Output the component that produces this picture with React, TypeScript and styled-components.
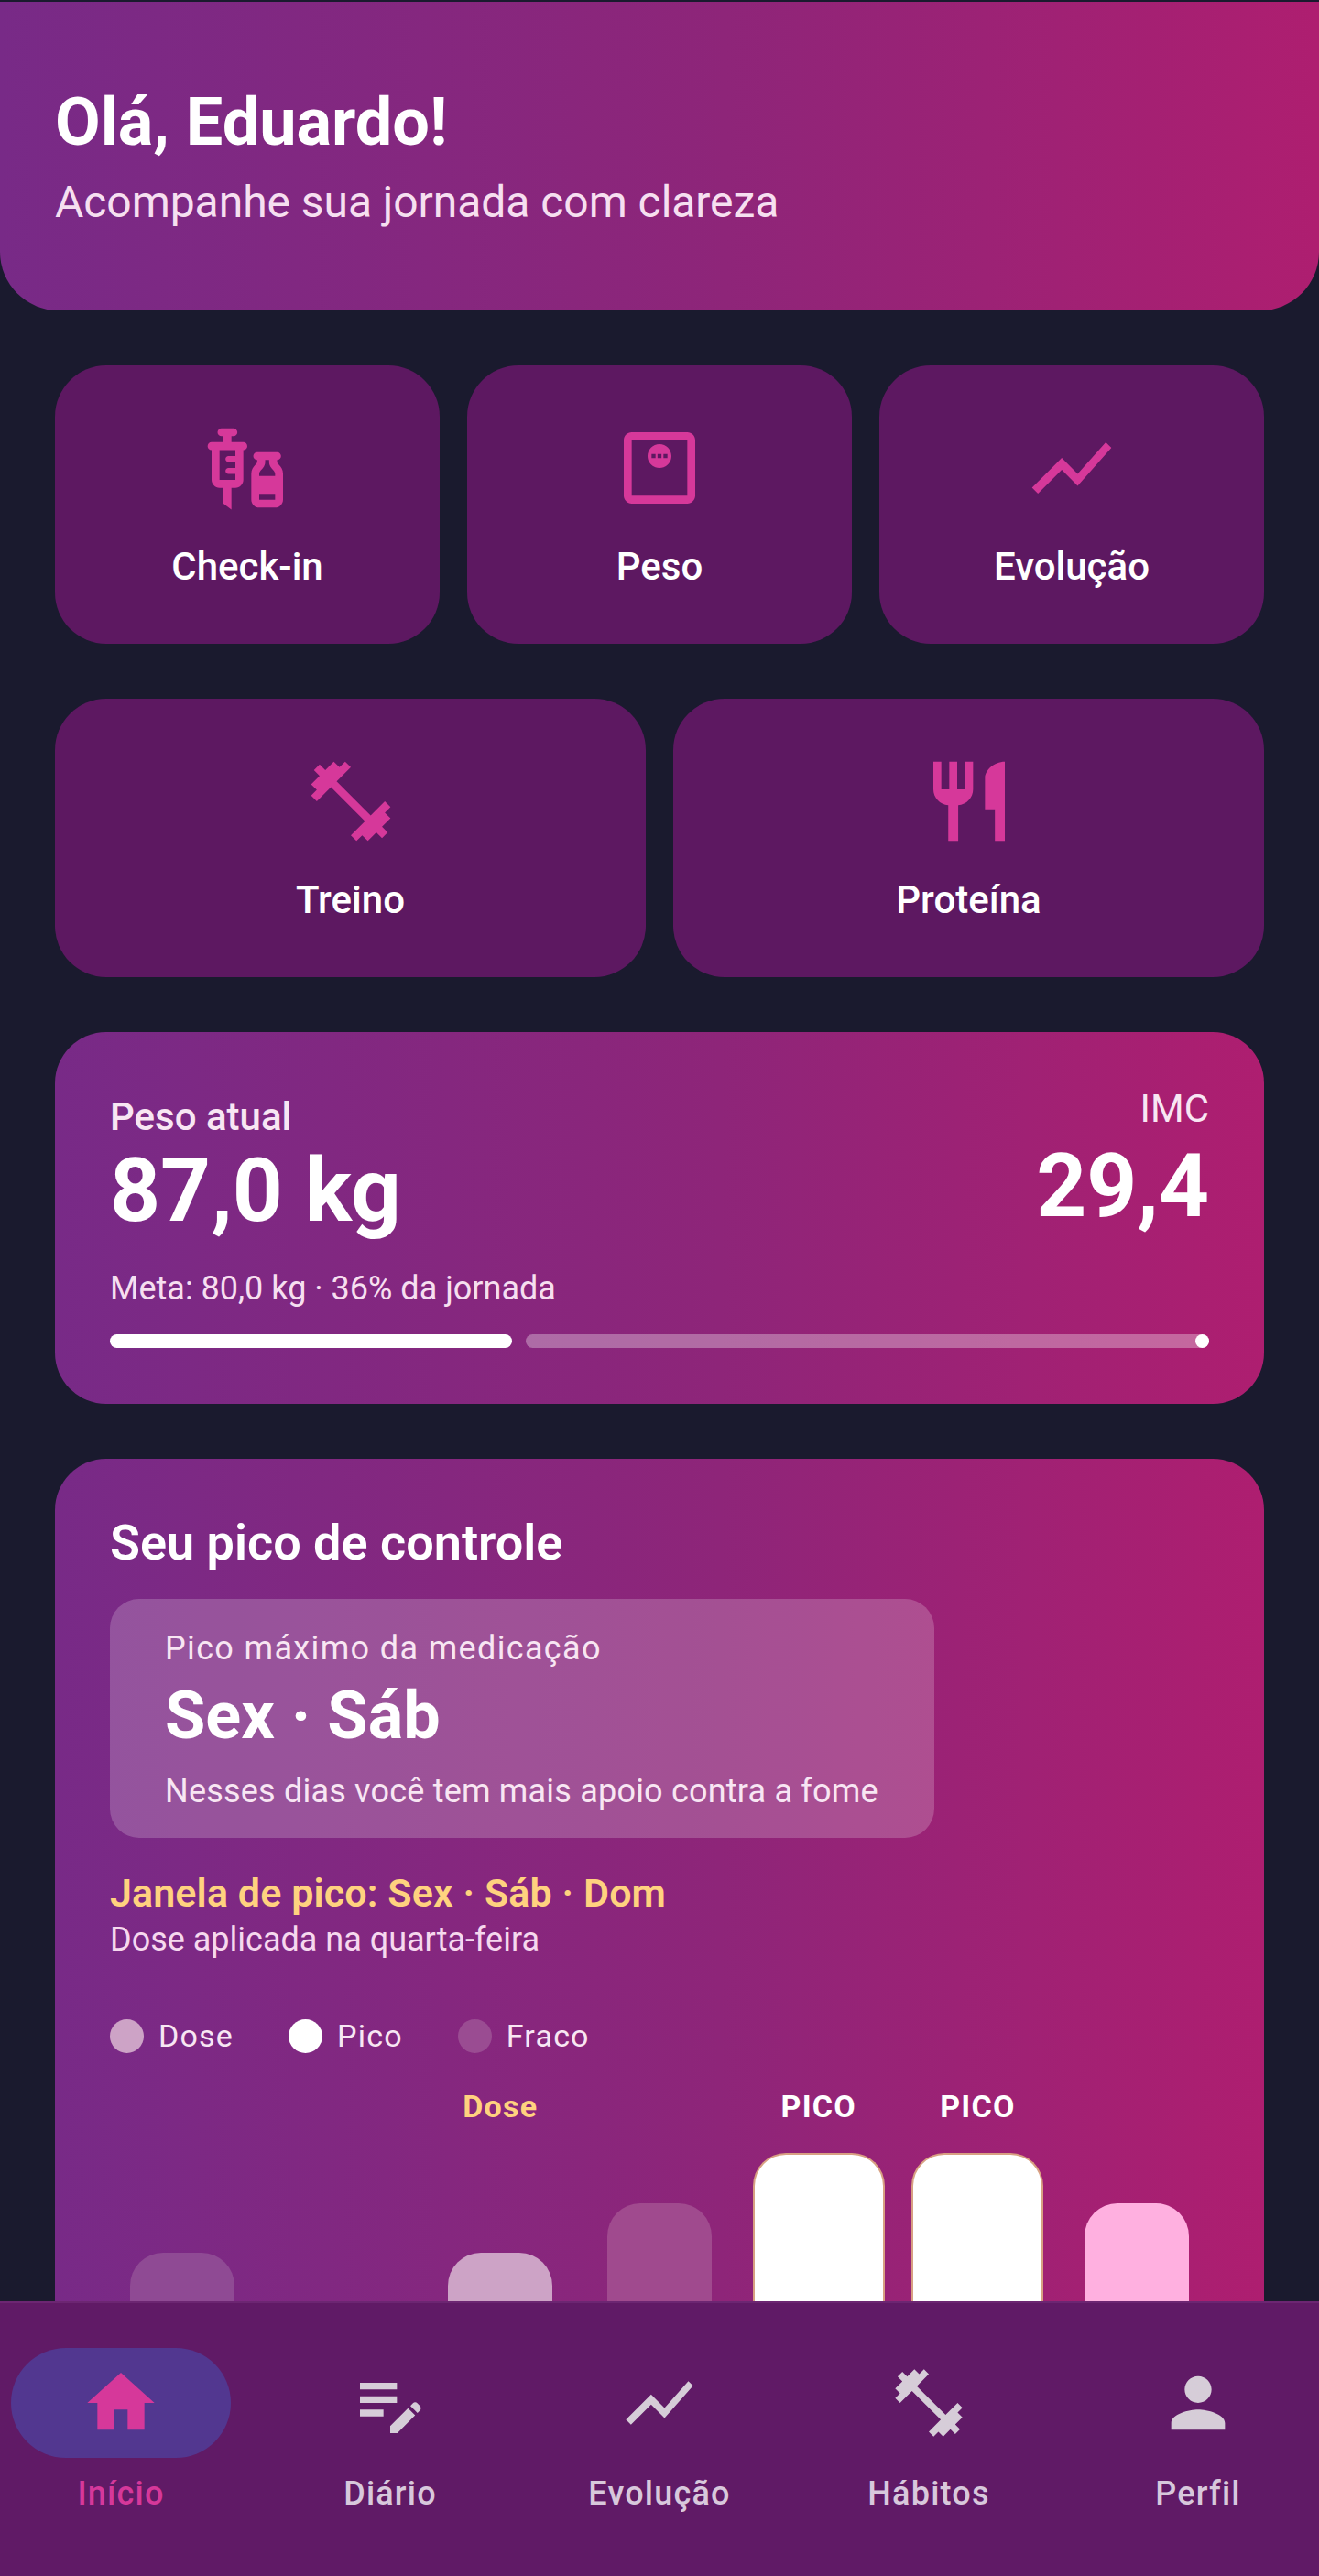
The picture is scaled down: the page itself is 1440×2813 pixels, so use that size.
import React from 'react';
import styled, { createGlobalStyle } from 'styled-components';
import {
  MdVaccines,
  MdOutlineMonitorWeight,
  MdShowChart,
  MdFitnessCenter,
  MdRestaurant,
  MdHome,
  MdEditNote,
  MdPerson,
} from 'react-icons/md';

const brandGradient = 'linear-gradient(90deg, #782a87 0%, #8e2579 55%, #ae1e70 100%)';

const GlobalStyle = createGlobalStyle`
  html, body {
    margin: 0;
    padding: 0;
    background: #1a1a2e;
  }
  * {
    box-sizing: border-box;
  }
`;

const Page = styled.div`
  width: 1440px;
  height: 2813px;
  display: flex;
  flex-direction: column;
  overflow: hidden;
  background: #1a1a2e;
  color: #fff;
  font-family: Roboto, 'Noto Sans', sans-serif;
`;

const Scroll = styled.main`
  flex: 1;
  min-height: 0;
  overflow: hidden;
`;

const Header = styled.header`
  height: 337px;
  margin-top: 2px;
  padding: 90px 60px 0;
  background: ${brandGradient};
  border-radius: 0 0 64px 64px;
`;

const Title = styled.h1`
  margin: 0;
  font-size: 72px;
  line-height: 84px;
  font-weight: 700;
`;

const Subtitle = styled.p`
  margin: 15px 0 0;
  font-size: 48px;
  line-height: 60px;
  letter-spacing: -0.05px;
  font-weight: 400;
  color: #f6dff0;
`;

const Content = styled.div`
  padding: 60px 60px 0;
  display: flex;
  flex-direction: column;
  gap: 60px;
`;

const ActionRow = styled.div<{ $columns: number }>`
  display: grid;
  grid-template-columns: repeat(${(p) => p.$columns}, 1fr);
  gap: 30px;
`;

const ActionCard = styled.button`
  height: 304px;
  padding: 60px 0 0;
  border: 0;
  border-radius: 56px;
  background: #5d1861;
  color: #fff;
  font: inherit;
  display: flex;
  flex-direction: column;
  align-items: center;
  gap: 28px;

  svg {
    width: 104px;
    height: 104px;
    color: #d6389a;
  }
`;

const ActionLabel = styled.span`
  font-size: 42px;
  line-height: 56px;
  font-weight: 500;
`;

const WeightCard = styled.section`
  height: 406px;
  padding: 65px 60px 0;
  border-radius: 56px;
  background: ${brandGradient};
`;

const WeightTop = styled.div`
  display: flex;
  justify-content: space-between;
`;

const WeightLabel = styled.div`
  font-size: 42px;
  line-height: 56px;
  font-weight: 500;
  color: #f8e6f3;
`;

const WeightValue = styled.div`
  font-size: 96px;
  line-height: 104px;
  font-weight: 700;
`;

const ImcColumn = styled.div`
  text-align: right;
  margin-top: -9px;
`;

const ImcLabel = styled.div`
  font-size: 42px;
  line-height: 56px;
  font-weight: 400;
  color: #f8e6f3;
`;

const ImcValue = styled.div`
  margin-top: 4px;
  font-size: 96px;
  line-height: 104px;
  font-weight: 700;
`;

const GoalText = styled.div`
  margin-top: 31px;
  font-size: 36px;
  line-height: 48px;
  color: #f6dff0;
`;

const Progress = styled.div`
  margin-top: 26px;
  height: 15px;
  display: flex;
  gap: 15px;
`;

const ProgressFill = styled.div`
  border-radius: 8px;
  background: #fff;
`;

const ProgressRest = styled.div`
  flex: 1;
  border-radius: 8px;
  background: rgba(255, 255, 255, 0.32);
  display: flex;
  justify-content: flex-end;

  &::after {
    content: '';
    width: 15px;
    height: 15px;
    border-radius: 50%;
    background: #fff;
  }
`;

const PeakCard = styled.section`
  padding: 60px 60px 0;
  border-radius: 56px 56px 0 0;
  background: ${brandGradient};
`;

const PeakTitle = styled.h2`
  margin: 0;
  font-size: 54px;
  line-height: 64px;
  font-weight: 600;
`;

const PeakBox = styled.div`
  width: 900px;
  height: 261px;
  margin-top: 29px;
  padding: 30px 60px 0;
  border-radius: 32px;
  background: rgba(255, 255, 255, 0.2);
`;

const PeakCaption = styled.div`
  font-size: 36px;
  line-height: 48px;
  letter-spacing: 1.35px;
  color: #f8e6f3;
`;

const PeakDays = styled.div`
  margin-top: 6px;
  font-size: 72px;
  line-height: 88px;
  font-weight: 700;
`;

const PeakHint = styled.div`
  margin-top: 14px;
  font-size: 36px;
  line-height: 48px;
  letter-spacing: 0.2px;
  color: #f8e6f3;
`;

const WindowText = styled.div`
  margin-top: 33px;
  font-size: 43px;
  line-height: 54px;
  letter-spacing: 0.1px;
  font-weight: 600;
  color: #ffd27f;
`;

const DoseText = styled.div`
  font-size: 36px;
  line-height: 48px;
  color: #f6d8ee;
`;

const Legend = styled.div`
  margin-top: 59px;
  display: flex;
  gap: 60px;
`;

const LegendItem = styled.div`
  display: flex;
  align-items: center;
  gap: 16px;
  font-size: 34px;
  line-height: 44px;
  letter-spacing: 1.2px;
  color: #f8e6f3;
`;

const LegendDot = styled.span<{ $color: string }>`
  width: 37px;
  height: 37px;
  border-radius: 50%;
  background: ${(p) => p.$color};
`;

const Chart = styled.div`
  margin: 35px -8px 0;
  height: 300px;
  display: grid;
  grid-template-columns: repeat(7, 1fr);
`;

const ChartColumn = styled.div`
  display: flex;
  flex-direction: column;
  align-items: center;
`;

const BarTag = styled.div<{ $dose?: boolean }>`
  font-size: 34px;
  line-height: 40px;
  font-weight: 700;
  letter-spacing: 1.2px;
  color: ${(p) => (p.$dose ? '#ffd27f' : '#fff')};
`;

const Bar = styled.div<{ $color: string; $peak?: boolean }>`
  width: ${(p) => (p.$peak ? 144 : 114)}px;
  margin-top: auto;
  border-radius: 36px 36px 0 0;
  background: ${(p) => p.$color};
  ${(p) => (p.$peak ? 'border: 2px solid #d8a082; border-bottom: 0;' : '')}
`;

const BottomNav = styled.nav`
  height: 300px;
  flex-shrink: 0;
  padding: 49px 12px 0;
  display: flex;
  justify-content: space-between;
  background: #601a66;
  border-top: 2px solid #6c2672;
`;

const NavItem = styled.div<{ $active?: boolean }>`
  width: 240px;
  display: flex;
  flex-direction: column;
  align-items: center;
  gap: 11px;
  font-size: 36px;
  line-height: 56px;
  font-weight: 500;
  letter-spacing: 1.2px;
  color: ${(p) => (p.$active ? '#d6389a' : '#d8c8dc')};
`;

const NavIcon = styled.div<{ $active?: boolean }>`
  width: 240px;
  height: 120px;
  border-radius: 60px;
  display: flex;
  align-items: center;
  justify-content: center;
  background: ${(p) => (p.$active ? '#523790' : 'transparent')};
  color: ${(p) => (p.$active ? '#d6389a' : '#d6cdd8')};

  svg {
    width: 88px;
    height: 88px;
  }
`;

const topActions = [
  { label: 'Check-in', icon: <MdVaccines /> },
  { label: 'Peso', icon: <MdOutlineMonitorWeight /> },
  { label: 'Evolução', icon: <MdShowChart /> },
];

const bottomActions = [
  { label: 'Treino', icon: <MdFitnessCenter /> },
  { label: 'Proteína', icon: <MdRestaurant /> },
];

const bars = [
  { height: 120, color: '#8f4a94' },
  { height: 0, color: 'transparent' },
  { height: 120, color: '#cda3c6', tag: 'Dose', dose: true },
  { height: 174, color: '#a04a8e' },
  { height: 229, color: '#fff', tag: 'PICO', peak: true },
  { height: 229, color: '#fff', tag: 'PICO', peak: true },
  { height: 174, color: '#ffb0e0' },
];

const navItems = [
  { label: 'Início', icon: <MdHome />, active: true },
  { label: 'Diário', icon: <MdEditNote /> },
  { label: 'Evolução', icon: <MdShowChart /> },
  { label: 'Hábitos', icon: <MdFitnessCenter /> },
  { label: 'Perfil', icon: <MdPerson /> },
];

const App = () => {
  return (
    <Page>
      <GlobalStyle />
      <Scroll>
        <Header>
          <Title>Olá, Eduardo!</Title>
          <Subtitle>Acompanhe sua jornada com clareza</Subtitle>
        </Header>
        <Content>
          <ActionRow $columns={3}>
            {topActions.map((a) => (
              <ActionCard key={a.label}>
                {a.icon}
                <ActionLabel>{a.label}</ActionLabel>
              </ActionCard>
            ))}
          </ActionRow>
          <ActionRow $columns={2}>
            {bottomActions.map((a) => (
              <ActionCard key={a.label}>
                {a.icon}
                <ActionLabel>{a.label}</ActionLabel>
              </ActionCard>
            ))}
          </ActionRow>
          <WeightCard>
            <WeightTop>
              <div>
                <WeightLabel>Peso atual</WeightLabel>
                <WeightValue>87,0 kg</WeightValue>
              </div>
              <ImcColumn>
                <ImcLabel>IMC</ImcLabel>
                <ImcValue>29,4</ImcValue>
              </ImcColumn>
            </WeightTop>
            <GoalText>Meta: 80,0 kg · 36% da jornada</GoalText>
            <Progress>
              <ProgressFill style={{ width: 439 }} />
              <ProgressRest />
            </Progress>
          </WeightCard>
          <PeakCard>
            <PeakTitle>Seu pico de controle</PeakTitle>
            <PeakBox>
              <PeakCaption>Pico máximo da medicação</PeakCaption>
              <PeakDays>Sex · Sáb</PeakDays>
              <PeakHint>Nesses dias você tem mais apoio contra a fome</PeakHint>
            </PeakBox>
            <WindowText>Janela de pico: Sex · Sáb · Dom</WindowText>
            <DoseText>Dose aplicada na quarta-feira</DoseText>
            <Legend>
              <LegendItem>
                <LegendDot $color="#cda3c6" />
                Dose
              </LegendItem>
              <LegendItem>
                <LegendDot $color="#fff" />
                Pico
              </LegendItem>
              <LegendItem>
                <LegendDot $color="#9a4c92" />
                Fraco
              </LegendItem>
            </Legend>
            <Chart>
              {bars.map((b, i) => (
                <ChartColumn key={i}>
                  {b.tag && <BarTag $dose={b.dose}>{b.tag}</BarTag>}
                  <Bar $color={b.color} $peak={b.peak} style={{ height: b.height }} />
                </ChartColumn>
              ))}
            </Chart>
          </PeakCard>
        </Content>
      </Scroll>
      <BottomNav>
        {navItems.map((n) => (
          <NavItem key={n.label} $active={n.active}>
            <NavIcon $active={n.active}>{n.icon}</NavIcon>
            {n.label}
          </NavItem>
        ))}
      </BottomNav>
    </Page>
  );
};

export default App;
